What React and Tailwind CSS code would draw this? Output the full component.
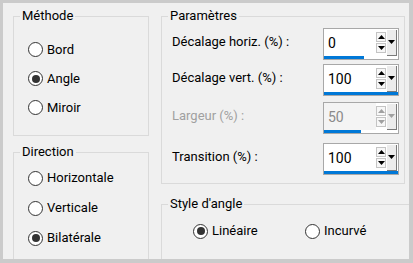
function Radio({ checked, label }) {
  return (
    <div className="flex items-center gap-[4px]">
      <span className="w-[15px] h-[15px] rounded-full border border-[#333333] bg-white flex items-center justify-center">
        {checked && <span className="w-[8px] h-[8px] rounded-full bg-[#333333]" />}
      </span>
      <span>{label}</span>
    </div>
  );
}

function Arrow({ down, disabled }) {
  return (
    <svg width="7" height="4" viewBox="0 0 7 4">
      <path
        d={down ? "M0 0H7L3.5 4Z" : "M0 4H7L3.5 0Z"}
        fill={disabled ? "#a0a0a0" : "#000"}
      />
    </svg>
  );
}

function SpinBox({ value, bar, disabled }) {
  return (
    <div className="w-[76px] h-[32px] border border-[#a8a8a8] bg-white flex flex-col">
      <div className="flex-1 flex">
        <div
          className={
            "flex-1 flex items-center pl-[4px] pt-[1px] text-[14px] " +
            (disabled ? "text-[#8a8a8a] bg-[#f4f4f4]" : "text-black")
          }
        >
          {value}
        </div>
        <div className="w-[10px] flex flex-col justify-center gap-[1px] mr-[1px]">
          <div className="h-[10px] border border-[#c4c4c4] bg-[#f7f7f7] flex items-center justify-center">
            <Arrow disabled={disabled} />
          </div>
          <div className="h-[10px] border border-[#c4c4c4] bg-[#f7f7f7] flex items-center justify-center">
            <Arrow down disabled={disabled} />
          </div>
        </div>
        <div className="w-[10px] mt-[1px] border-r border-b border-[#7a7a7a] bg-[#ececec] flex justify-center pt-[10px] mr-[1px]">
          <Arrow down disabled={disabled} />
        </div>
      </div>
      <div className="h-[3px]">
        <div className="h-[3px] bg-[#0078d7]" style={{ width: bar }} />
      </div>
    </div>
  );
}

function SpinRow({ label, value, bar, disabled, mt }) {
  return (
    <div className={"flex items-center justify-between " + mt}>
      <span className={"pb-[4px] " + (disabled ? "text-[#a0a0a0]" : "")}>{label}</span>
      <SpinBox value={value} bar={bar} disabled={disabled} />
    </div>
  );
}

function Group({ title, className, children }) {
  return (
    <fieldset className={"border border-[#dadada] shrink-0 " + className}>
      <legend className="ml-[6px] px-[2px]">{title}</legend>
      {children}
    </fieldset>
  );
}

export default function App() {
  return (
    <div className="w-[413px] h-[263px] bg-[#cbcbcb] pt-[3px] pl-[3px] pr-[4px] pb-[4px] font-['Roboto',sans-serif] text-[13px] leading-[16px] text-black">
      <div className="w-full h-full bg-[#f0f0f0] overflow-hidden flex gap-[12px] pl-[10px] pt-[5px]">
        <div className="w-[136px] shrink-0 flex flex-col">
          <Group title="Méthode" className="h-[128px]">
            <div className="pl-[14px] pt-[11px]">
              <div className="h-[29px] flex items-center"><Radio label="Bord" /></div>
              <div className="h-[29px] flex items-center"><Radio checked label="Angle" /></div>
              <div className="h-[29px] flex items-center"><Radio label="Miroir" /></div>
            </div>
          </Group>
          <Group title="Direction" className="h-[140px] mt-[8px]">
            <div className="pl-[14px] pt-[3px]">
              <div className="h-[30px] flex items-center"><Radio label="Horizontale" /></div>
              <div className="h-[30px] flex items-center"><Radio label="Verticale" /></div>
              <div className="h-[30px] flex items-center"><Radio checked label="Bilatérale" /></div>
            </div>
          </Group>
        </div>
        <div className="w-[244px] shrink-0 flex flex-col">
          <Group title="Paramètres" className="h-[176px]">
            <div className="pl-[10px] pr-[5px] pt-[4px]">
              <SpinRow label="Décalage horiz. (%) :" value="0" bar="40px" mt="" />
              <SpinRow label="Décalage vert. (%) :" value="100" bar="100%" mt="mt-[4px]" />
              <SpinRow label="Largeur (%) :" value="50" bar="37px" disabled mt="mt-[6px]" />
              <SpinRow label="Transition (%) :" value="100" bar="100%" mt="mt-[9px]" />
            </div>
          </Group>
          <Group title="Style d'angle" className="w-[262px] h-[90px] mt-[12px]">
            <div className="pl-[31px] pt-[9px]">
              <div className="h-[20px] flex items-center">
                <div className="w-[112px]"><Radio checked label="Linéaire" /></div>
                <Radio label="Incurvé" />
              </div>
            </div>
          </Group>
        </div>
      </div>
    </div>
  );
}
